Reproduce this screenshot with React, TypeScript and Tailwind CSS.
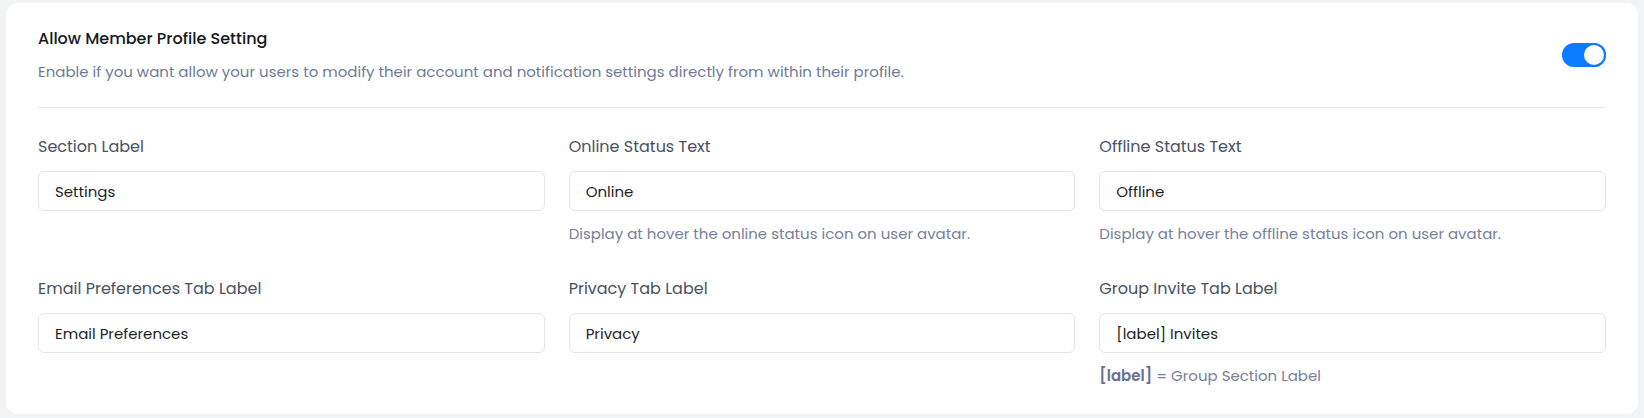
import { useState } from "react";

type Field = {
  label: string;
  value: string;
  help?: React.ReactNode;
};

const fields: Field[] = [
  { label: "Section Label", value: "Settings" },
  {
    label: "Online Status Text",
    value: "Online",
    help: "Display at hover the online status icon on user avatar.",
  },
  {
    label: "Offline Status Text",
    value: "Offline",
    help: "Display at hover the offline status icon on user avatar.",
  },
  { label: "Email Preferences Tab Label", value: "Email Preferences" },
  { label: "Privacy Tab Label", value: "Privacy" },
  {
    label: "Group Invite Tab Label",
    value: "[label] Invites",
    help: (
      <>
        <span className="font-semibold text-[#65728f]">[label]</span> = Group Section Label
      </>
    ),
  },
];

function Toggle() {
  const [on, setOn] = useState(true);
  return (
    <button
      type="button"
      onClick={() => setOn(!on)}
      className={`flex h-6 w-11 shrink-0 items-center rounded-full p-0 transition-colors ${
        on ? "bg-[#0b7cff] justify-end" : "bg-gray-300 justify-start"
      }`}
    >
      <span className="h-6 w-6 rounded-full border-2 border-[#0b7cff] bg-white" />
    </button>
  );
}

function InputField({ field }: { field: Field }) {
  const [value, setValue] = useState(field.value);
  return (
    <div className="flex flex-col">
      <label className="text-[16px] leading-[24px] text-[#4a5161]">{field.label}</label>
      <input
        value={value}
        onChange={(e) => setValue(e.target.value)}
        className="mt-[12px] h-10 w-full rounded-md border border-[#e3e5e8] bg-white px-4 text-[15px] text-[#1c1f26] outline-none"
      />
      {field.help && (
        <p className="mt-[12px] text-[15px] leading-[22px] text-[#76819a]">{field.help}</p>
      )}
    </div>
  );
}

export default function App() {
  return (
    <div
      className="min-h-screen bg-[#f2f3f5] px-[6px] pt-[3px]"
      style={{ fontFamily: '"Poppins", "Open Sans", sans-serif' }}
    >
      <div className="rounded-xl bg-white px-8 pt-6 pb-[27px]">
        <div className="flex items-center justify-between border-b border-[#e6e8eb] pb-6">
          <div>
            <h2 className="text-[16px] font-medium leading-[24px] text-[#15171c]">
              Allow Member Profile Setting
            </h2>
            <p className="mt-[10px] text-[15px] leading-[22px] text-[#6f7b95]">
              Enable if you want allow your users to modify their account and notification settings
              directly from within their profile.
            </p>
          </div>
          <Toggle />
        </div>

        <div className="mt-[27px] grid grid-cols-3 gap-x-6 gap-y-[32px]">
          {fields.map((f) => (
            <InputField key={f.label} field={f} />
          ))}
        </div>
      </div>
    </div>
  );
}
